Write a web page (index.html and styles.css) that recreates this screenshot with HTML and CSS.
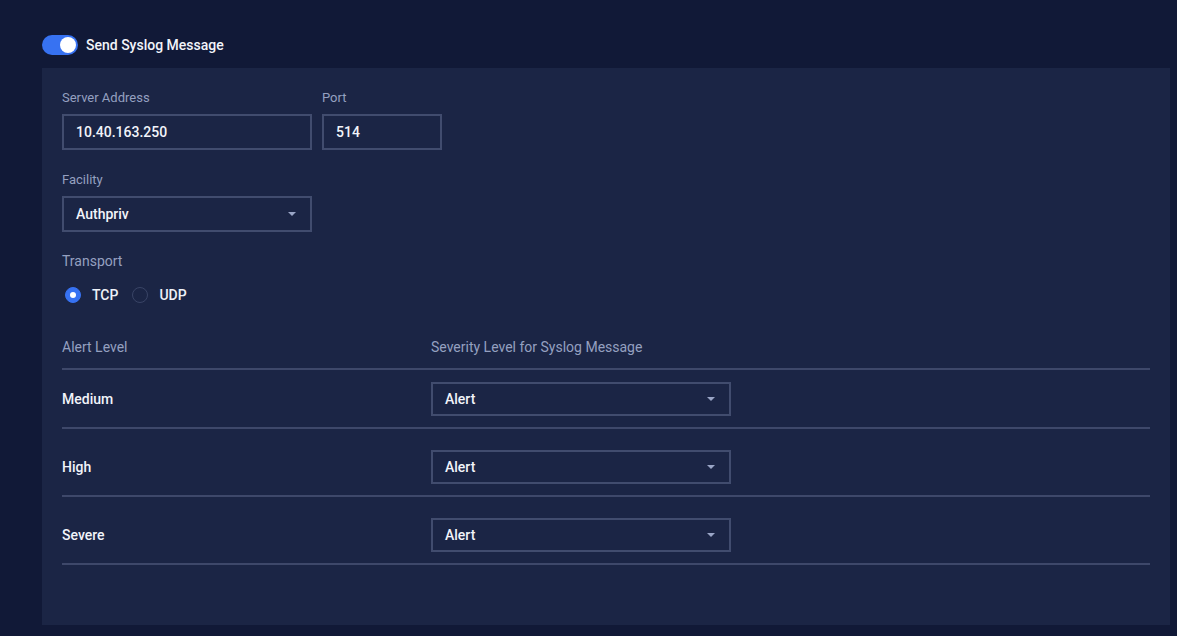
FILE: index.html
```html
<!DOCTYPE html>
<html>
<head>
<meta charset="utf-8">
<link rel="stylesheet" href="styles.css">
</head>
<body>
<div class="page">
  <div class="toggle-row">
    <span class="toggle"><span class="knob"></span></span>
    <span class="toggle-label">Send Syslog Message</span>
  </div>
  <div class="panel">
    <div class="row-fields">
      <div class="field">
        <div class="label">Server Address</div>
        <div class="input w250">10.40.163.250</div>
      </div>
      <div class="field">
        <div class="label">Port</div>
        <div class="input w120">514</div>
      </div>
    </div>
    <div class="field mt">
      <div class="label">Facility</div>
      <div class="input select w250">Authpriv<span class="caret"></span></div>
    </div>
    <div class="field mt">
      <div class="label label-lg">Transport</div>
      <div class="radios">
        <span class="radio checked"></span><span class="radio-text">TCP</span>
        <span class="radio"></span><span class="radio-text">UDP</span>
      </div>
    </div>
    <div class="table">
      <div class="thead">
        <div class="col1">Alert Level</div>
        <div class="col2">Severity Level for Syslog Message</div>
      </div>
      <div class="trow">
        <div class="col1 level">Medium</div>
        <div class="col2"><div class="input select w300 h34">Alert<span class="caret"></span></div></div>
      </div>
      <div class="trow">
        <div class="col1 level">High</div>
        <div class="col2"><div class="input select w300 h34">Alert<span class="caret"></span></div></div>
      </div>
      <div class="trow">
        <div class="col1 level">Severe</div>
        <div class="col2"><div class="input select w300 h34">Alert<span class="caret"></span></div></div>
      </div>
    </div>
  </div>
</div>
</body>
</html>
```

FILE: styles.css
```css
html, body {
  margin: 0;
  padding: 0;
  background: #111937;
  font-family: Roboto, "Liberation Sans", Arial, sans-serif;
  color: #eef1f8;
}
.page {
  width: 1177px;
  height: 636px;
  padding: 35px 7px 0 42px;
  box-sizing: border-box;
}
.toggle-row {
  display: flex;
  align-items: center;
  height: 20px;
  gap: 8px;
}
.toggle {
  width: 36px;
  height: 20px;
  border-radius: 10px;
  background: #3772f2;
  display: flex;
  align-items: center;
  justify-content: flex-end;
  padding: 0 2px;
  box-sizing: border-box;
}
.knob {
  width: 16px;
  height: 16px;
  border-radius: 50%;
  background: #ffffff;
}
.toggle-label {
  font-size: 14px;
  font-weight: 500;
  color: #f2f4fa;
}
.panel {
  margin-top: 13px;
  background: #1b2545;
  height: 557px;
  padding: 21px 20px 0 20px;
  box-sizing: border-box;
}
.row-fields {
  display: flex;
  gap: 10px;
}
.field.mt {
  margin-top: 21px;
}
.field.mt + .field.mt {
  margin-top: 20px;
}
.label {
  font-size: 13px;
  color: #95a0c0;
  line-height: 18px;
  margin-bottom: 7px;
}
.label-lg {
  font-size: 14px;
}
.input {
  height: 36px;
  border: 2px solid #414c6e;
  box-sizing: border-box;
  padding: 0 12px;
  display: flex;
  align-items: center;
  font-size: 14px;
  font-weight: 500;
  color: #f2f4fa;
  position: relative;
}
.w250 { width: 250px; }
.w120 { width: 120px; }
.w300 { width: 300px; }
.h34 { height: 34px; }
.caret {
  position: absolute;
  right: 14px;
  top: 50%;
  margin-top: -2px;
  width: 0;
  height: 0;
  border-left: 4px solid transparent;
  border-right: 4px solid transparent;
  border-top: 4px solid #9aa5c6;
}
.radios {
  display: flex;
  align-items: center;
  height: 20px;
  margin-top: 15px;
  margin-left: 3px;
}
.radio {
  width: 16px;
  height: 16px;
  border-radius: 50%;
  border: 1px solid #394466;
  box-sizing: border-box;
  position: relative;
}
.radio.checked {
  background: #3772f2;
  border-color: #3772f2;
}
.radio.checked::after {
  content: "";
  position: absolute;
  left: 4px;
  top: 4px;
  width: 6px;
  height: 6px;
  border-radius: 50%;
  background: #fff;
}
.radio-text {
  font-size: 14px;
  font-weight: 500;
  margin: 0 14px 0 11px;
}
.table {
  margin-top: 31px;
}
.thead {
  display: flex;
  align-items: flex-start;
  height: 34px;
  box-sizing: border-box;
  border-bottom: 2px solid #3e486a;
  font-size: 14px;
  line-height: 20px;
  color: #95a0c0;
  padding-top: 1px;
}
.col1 { width: 369px; }
.col2 { flex: 1; }
.trow {
  display: flex;
  align-items: center;
  height: 59px;
  box-sizing: border-box;
  border-bottom: 2px solid #3e486a;
}
.trow + .trow {
  height: 68px;
  padding-top: 9px;
}
.level {
  font-size: 14px;
  font-weight: 500;
  color: #f2f4fa;
}
```
